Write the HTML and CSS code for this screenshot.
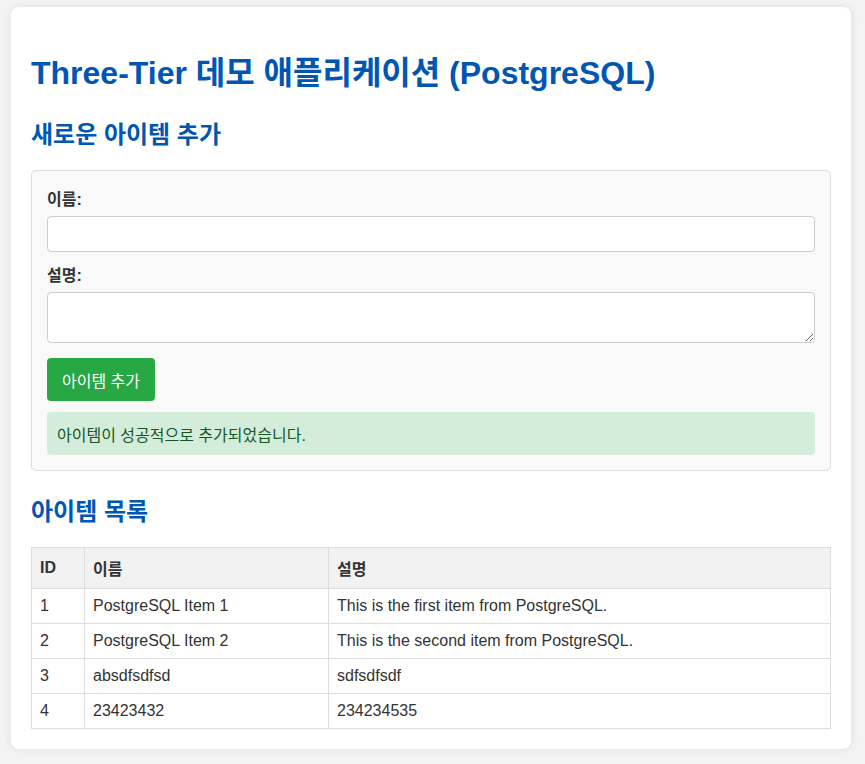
FILE: index.html
```html
<!DOCTYPE html>
<html lang="ko">
<head>
<meta charset="utf-8">
<title>Three-Tier 데모 애플리케이션</title>
<link rel="stylesheet" href="styles.css">
</head>
<body>
<div class="container">
  <h1>Three-Tier 데모 애플리케이션 (PostgreSQL)</h1>
  <h2>새로운 아이템 추가</h2>
  <form class="item-form">
    <div class="form-group">
      <label for="name">이름:</label>
      <input type="text" id="name" class="field">
    </div>
    <div class="form-group">
      <label for="desc">설명:</label>
      <textarea id="desc" class="field area"></textarea>
    </div>
    <button type="button" class="btn">아이템 추가</button>
    <div class="message success">아이템이 성공적으로 추가되었습니다.</div>
  </form>
  <h2>아이템 목록</h2>
  <table class="items">
    <thead>
      <tr><th class="col-id">ID</th><th class="col-name">이름</th><th>설명</th></tr>
    </thead>
    <tbody>
      <tr><td>1</td><td>PostgreSQL Item 1</td><td>This is the first item from PostgreSQL.</td></tr>
      <tr><td>2</td><td>PostgreSQL Item 2</td><td>This is the second item from PostgreSQL.</td></tr>
      <tr><td>3</td><td>absdfsdfsd</td><td>sdfsdfsdf</td></tr>
      <tr><td>4</td><td>23423432</td><td>234234535</td></tr>
    </tbody>
  </table>
</div>
</body>
</html>
```
FILE: styles.css
```css
html, body {
  margin: 0;
  padding: 0;
}
body {
  background: #f4f4f4;
  font-family: "Liberation Sans", "Noto Sans CJK KR", sans-serif;
  font-size: 16px;
  color: #333;
  padding: 7px 0 15px 11px;
}
.container {
  width: 800px;
  padding: 20px;
  background: #fff;
  border-radius: 8px;
  box-shadow: 0 0 10px rgba(0, 0, 0, 0.1);
}
h1 {
  font-size: 32px;
  color: #0056b3;
  margin: 20px 0 22px 0;
}
h2 {
  font-size: 24px;
  color: #0056b3;
  margin: 20px 0;
}
.item-form {
  background: #f9f9f9;
  border: 1px solid #ddd;
  border-radius: 5px;
  padding: 15px;
  margin-bottom: 21px;
}
.form-group {
  margin-bottom: 10px;
}
.form-group label {
  display: block;
  font-weight: bold;
  margin-bottom: 6px;
}
.field {
  display: block;
  width: 100%;
  box-sizing: border-box;
  height: 36px;
  padding: 8px;
  border: 1px solid #ccc;
  border-radius: 4px;
  background: #fff;
  font-family: inherit;
  font-size: 16px;
  margin: 0;
}
.area {
  height: 51px;
  resize: vertical;
}
.btn {
  display: block;
  background: #28a745;
  color: #fff;
  border: none;
  border-radius: 4px;
  padding: 10px 15px;
  font-family: inherit;
  font-size: 16px;
  height: 43px;
  margin-top: 15px;
}
.message {
  margin-top: 11px;
  padding: 10px;
  border-radius: 4px;
  height: 43px;
  box-sizing: border-box;
}
.success {
  background: #d4edda;
  color: #155724;
}
.items {
  width: 100%;
  border-collapse: collapse;
}
.items th,
.items td {
  border: 1px solid #ddd;
  padding: 8px;
  text-align: left;
}
.items th {
  background: #f2f2f2;
  height: 24px;
}
.items td {
  height: 18px;
}
.col-id {
  width: 36px;
}
.col-name {
  width: 227px;
}
```
